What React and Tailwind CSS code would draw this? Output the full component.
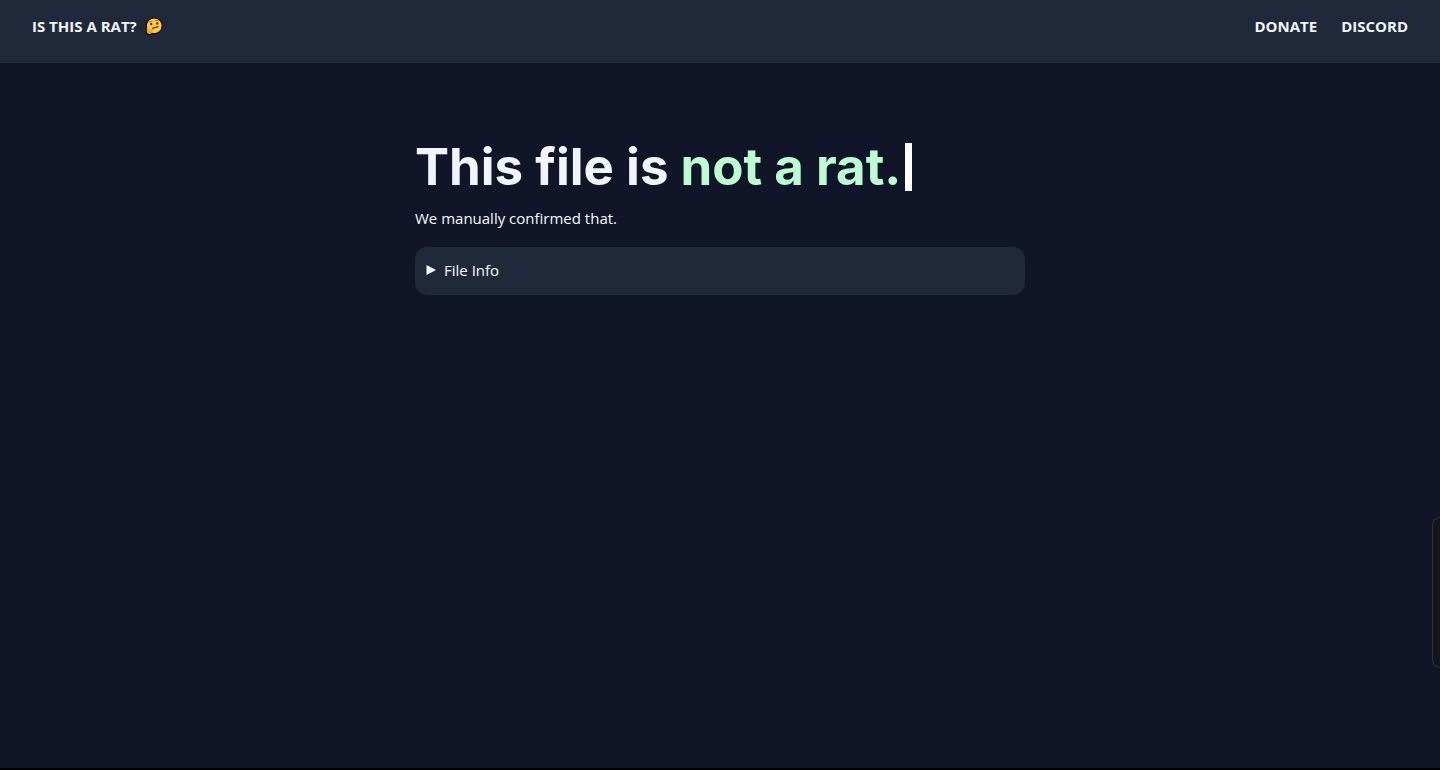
function ThinkingFace() {
  return (
    <svg viewBox="0 0 36 36" className="size-[18px] shrink-0" role="img" aria-label="Thinking face">
      <circle cx="18.500" cy="17.500" r="16" fill="#ffc83d" stroke="#0b0b0b" strokeWidth="2.500" />
      <path d="M2.500 21v8q0 5.500 5.500 5.500h4" fill="none" stroke="#0b0b0b" strokeWidth="2.500" />
      <path d="M8 10q3-2 6-1M21 7q4-1 7 1" fill="none" stroke="#b87412" strokeWidth="2" strokeLinecap="round" />
      <ellipse cx="12.500" cy="14" rx="2" ry="2.400" fill="#2c1c08" />
      <ellipse cx="24.500" cy="13" rx="2" ry="2.400" fill="#2c1c08" />
      <path d="M15 22.500L26 19.500" fill="none" stroke="#2c1c08" strokeWidth="2.400" strokeLinecap="round" />
      <path
        d="M3.500 21q1.500-1.500 2.500 0l2 4 9-1.500q2 .5 1 2.500l-4 1.500q1 6-5 6.500-5 .5-5.500-5z"
        fill="#eba52c"
      />
    </svg>
  );
}

export default function App() {
  return (
    <div className="relative flex min-h-screen flex-col overflow-hidden border-b-2 border-black bg-[#101528] font-['Open_Sans','Noto_Sans',sans-serif] text-[15px] leading-6 text-slate-50">
      <header className="bg-[#20293a] px-8 pt-3.5 pb-[25px]">
        <nav className="flex items-center justify-between font-bold text-slate-100">
          <a href="#home" className="flex items-center gap-2">
            IS THIS A RAT?
            <ThinkingFace />
          </a>
          <div className="flex gap-6">
            <a href="#donate">DONATE</a>
            <a href="#discord">DISCORD</a>
          </div>
        </nav>
      </header>

      <main className="mx-auto w-full max-w-[610px] pt-20">
        <h1 className="flex items-center gap-1 whitespace-nowrap font-[Inter,sans-serif] text-[51px] leading-12 font-bold text-slate-100">
          <span>
            This file is <span className="text-[#bdfbd0]">not a rat.</span>
          </span>
          <span className="h-12 w-[7px] bg-white" />
        </h1>
        <p className="mt-[15px]">We manually confirmed that.</p>
        <details className="mt-[17px] rounded-xl bg-[#20293a] px-[11px] pt-[11px] pb-[13px]">
          <summary className="flex items-center gap-2 list-none">
            <svg viewBox="0 0 10 10" className="size-2.5" fill="currentColor" aria-hidden="true">
              <path d="M0.500 0L10 5L0.500 10z" />
            </svg>
            File Info
          </summary>
          <p className="mt-2">This file has been checked.</p>
        </details>
      </main>

      <div className="absolute top-[517px] right-0 h-[151px] w-2 rounded-l-lg border border-r-0 border-[#30333c] bg-[#14161c]" />
    </div>
  );
}
